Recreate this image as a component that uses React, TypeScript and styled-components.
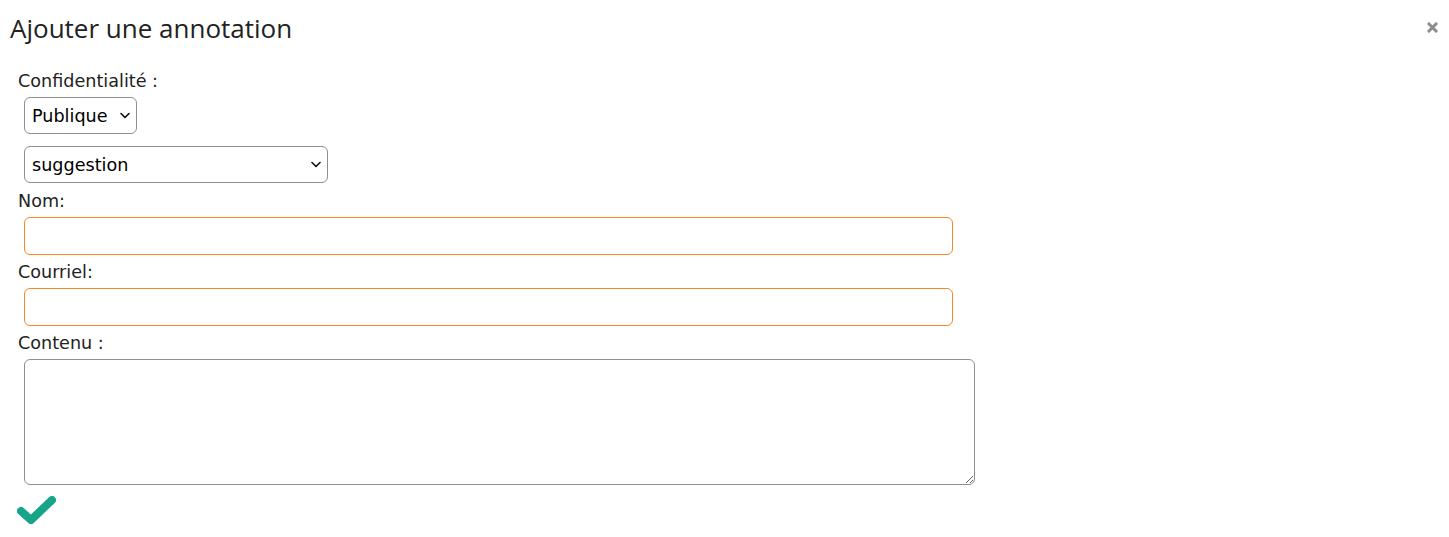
import React from "react";
import styled, { createGlobalStyle } from "styled-components";

const Global = createGlobalStyle`
  html, body { margin: 0; padding: 0; background: #fff; }
  body { font-family: "DejaVu Sans", Verdana, sans-serif; color: #222; }
`;

const Dialog = styled.div`
  width: 1449px;
  height: 537px;
  box-sizing: border-box;
  padding: 10px 0 0 0;
`;

const Header = styled.div`
  display: flex;
  justify-content: space-between;
  align-items: flex-start;
  padding: 0 11px 0 10px;
  height: 40px;
`;

const Title = styled.h2`
  margin: 0;
  font-family: "Open Sans", "Noto Sans", sans-serif;
  font-weight: 400;
  font-size: 26px;
  line-height: 36px;
  color: #222;
`;

const Close = styled.button`
  border: 0;
  background: none;
  padding: 0;
  margin-top: 12px;
  width: 11px;
  height: 11px;
  display: flex;
  align-items: center;
  justify-content: center;
  cursor: pointer;
`;

const Form = styled.form`
  display: flex;
  flex-direction: column;
  align-items: flex-start;
  padding: 20px 0 0 18px;
`;

const Label = styled.label`
  font-family: "DejaVu Sans", Verdana, sans-serif;
  font-size: 17.6px;
  line-height: 22px;
  color: #222;
  margin-bottom: 5px;
`;

const SelectWrap = styled.div<{ $w: number }>`
  position: relative;
  width: ${(p) => p.$w}px;
  height: 37px;
  margin-left: 6px;
`;

const Select = styled.select`
  appearance: none;
  -webkit-appearance: none;
  width: 100%;
  height: 100%;
  box-sizing: border-box;
  font-family: "DejaVu Sans", Verdana, sans-serif;
  font-size: 17.6px;
  color: #000;
  border: 1px solid #8f8f8f;
  border-radius: 6px;
  background: #fff;
  padding: 0 24px 0 7px;
  outline: none;
`;

const Chevron = styled.svg`
  position: absolute;
  right: 7px;
  top: 15px;
  pointer-events: none;
`;

const Gap = styled.div<{ $h: number }>`
  height: ${(p) => p.$h}px;
`;

const Input = styled.input`
  width: 929px;
  height: 38px;
  box-sizing: border-box;
  margin: 0 0 0 6px;
  border: 1px solid #f5862a;
  border-radius: 6px;
  outline: none;
  font-size: 17.6px;
  font-family: "DejaVu Sans", Verdana, sans-serif;
  padding: 0 8px;
`;

const TextArea = styled.textarea`
  width: 951px;
  height: 126px;
  box-sizing: border-box;
  margin: 0 0 0 6px;
  border: 1px solid #8f8f8f;
  border-radius: 6px;
  font-size: 17.6px;
  font-family: "DejaVu Sans", Verdana, sans-serif;
  padding: 6px;
  outline: none;
`;

const Submit = styled.button`
  border: 0;
  background: none;
  padding: 0;
  margin: 11px 0 0 -1px;
  cursor: pointer;
  display: flex;
`;

const Chev = () => (
  <Chevron width="10" height="7" viewBox="0 0 10 7">
    <path d="M1 1.5 L5 5.5 L9 1.5" fill="none" stroke="#111" strokeWidth="1.6" strokeLinecap="round" strokeLinejoin="round" />
  </Chevron>
);

export default function App() {
  return (
    <>
      <Global />
      <Dialog>
        <Header>
          <Title>Ajouter une annotation</Title>
          <Close aria-label="Fermer">
            <svg width="11" height="11" viewBox="0 0 11 11">
              <path d="M2 2 L9 9 M9 2 L2 9" stroke="#8c8c8c" strokeWidth="3" strokeLinecap="square" />
            </svg>
          </Close>
        </Header>
        <Form onSubmit={(e) => e.preventDefault()}>
          <Label>Confidentialité :</Label>
          <SelectWrap $w={113}>
            <Select defaultValue="pub">
              <option value="pub">Publique</option>
              <option value="priv">Privée</option>
            </Select>
            <Chev />
          </SelectWrap>
          <Gap $h={12} />
          <SelectWrap $w={304}>
            <Select defaultValue="sug">
              <option value="sug">suggestion</option>
              <option value="com">commentaire</option>
            </Select>
            <Chev />
          </SelectWrap>
          <Gap $h={7} />
          <Label>Nom:</Label>
          <Input type="text" />
          <Gap $h={6} />
          <Label>Courriel:</Label>
          <Input type="email" />
          <Gap $h={6} />
          <Label>Contenu :</Label>
          <TextArea />
          <Submit aria-label="Valider">
            <svg width="40" height="30" viewBox="0 0 40 30">
              <path d="M4 15 L14 24 L35 4" fill="none" stroke="#17a589" strokeWidth="8" strokeLinecap="round" strokeLinejoin="round" />
            </svg>
          </Submit>
        </Form>
      </Dialog>
    </>
  );
}
